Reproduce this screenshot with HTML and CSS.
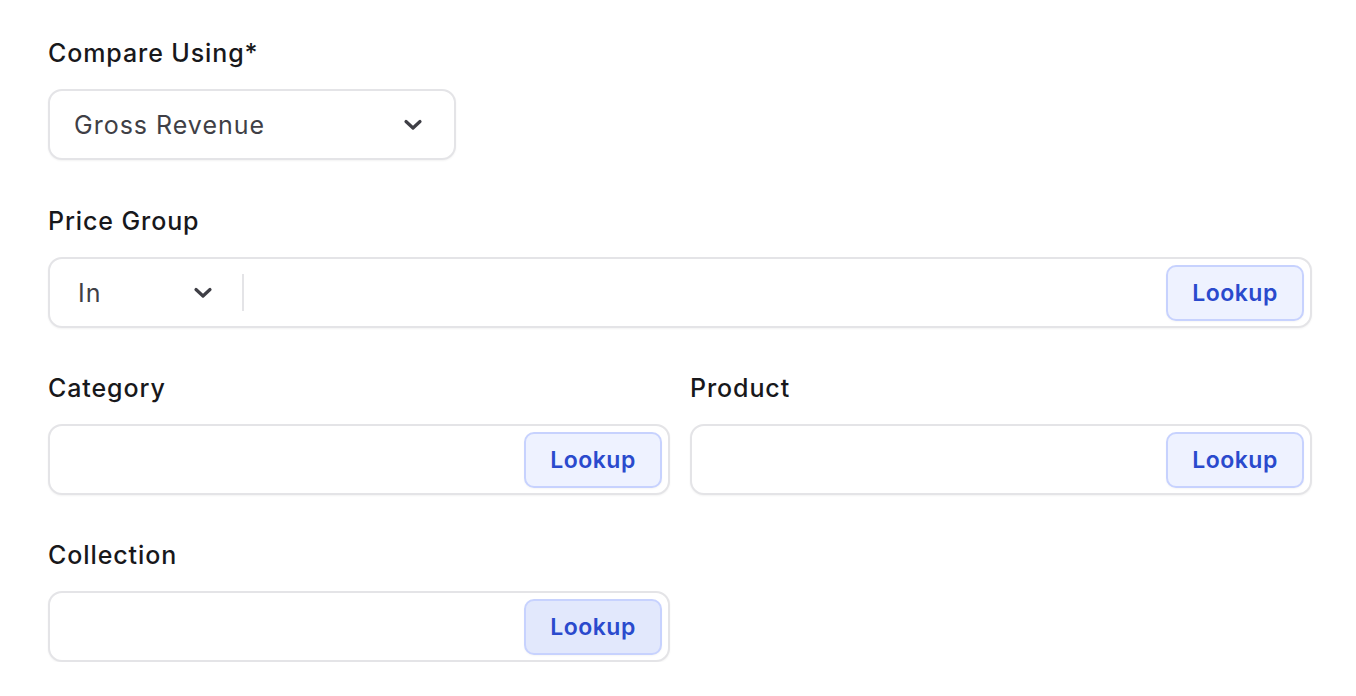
FILE: index.html
```html
<!DOCTYPE html>
<html lang="en">
<head>
<meta charset="utf-8">
<title>Filters</title>
<link rel="stylesheet" href="styles.css">
</head>
<body>
<form class="filters">
  <div class="field field--narrow">
    <label class="field__label">Compare Using*</label>
    <div class="select">
      <span class="select__value">Gross Revenue</span>
      <svg class="chevron" viewBox="0 0 20 12" width="20" height="12"><path d="M3 2.5 L10 9 L17 2.5" fill="none" stroke="currentColor" stroke-width="3.2" stroke-linecap="round" stroke-linejoin="round"/></svg>
    </div>
  </div>

  <div class="field">
    <label class="field__label">Price Group</label>
    <div class="lookup">
      <div class="lookup__op">
        <span class="lookup__op-value">In</span>
        <svg class="chevron" viewBox="0 0 20 12" width="20" height="12"><path d="M3 2.5 L10 9 L17 2.5" fill="none" stroke="currentColor" stroke-width="3.2" stroke-linecap="round" stroke-linejoin="round"/></svg>
      </div>
      <span class="lookup__divider"></span>
      <span class="lookup__input"></span>
      <button type="button" class="lookup__btn">Lookup</button>
    </div>
  </div>

  <div class="field-row">
    <div class="field">
      <label class="field__label">Category</label>
      <div class="lookup">
        <span class="lookup__input"></span>
        <button type="button" class="lookup__btn">Lookup</button>
      </div>
    </div>
    <div class="field">
      <label class="field__label">Product</label>
      <div class="lookup">
        <span class="lookup__input"></span>
        <button type="button" class="lookup__btn">Lookup</button>
      </div>
    </div>
  </div>

  <div class="field-row">
    <div class="field">
      <label class="field__label">Collection</label>
      <div class="lookup">
        <span class="lookup__input"></span>
        <button type="button" class="lookup__btn lookup__btn--hover">Lookup</button>
      </div>
    </div>
  </div>
</form>
</body>
</html>
```

FILE: styles.css
```css
* { box-sizing: border-box; }

body {
  margin: 0;
  background: #ffffff;
  font-family: Inter, "Noto Sans", sans-serif;
  color: #18181b;
}

.filters {
  width: 1264px;
  margin: 0 0 0 48px;
  padding-top: 37px;
  display: flex;
  flex-direction: column;
  gap: 44px;
}

.field {
  display: flex;
  flex-direction: column;
  gap: 20px;
}

.field--narrow {
  width: 408px;
  margin-bottom: 1px;
}

.field__label {
  font-size: 25px;
  line-height: 32px;
  font-weight: 500;
  letter-spacing: 0.9px;
  color: #18181b;
}

.field-row {
  display: grid;
  grid-template-columns: 1fr 1fr;
  gap: 20px;
}

.select,
.lookup {
  height: 71px;
  border: 2px solid #e4e4e7;
  border-radius: 14px;
  background: #fff;
  box-shadow: 0 1px 2px rgba(0, 0, 0, 0.05);
  display: flex;
  align-items: center;
}

.select {
  padding: 0 31px 0 24px;
  justify-content: space-between;
}

.select__value {
  font-size: 25px;
  letter-spacing: 1px;
  color: #3f3f46;
}

.chevron {
  color: #3f3f46;
  flex: none;
}

.lookup {
  padding: 0 6px 0 0;
}

.lookup__op {
  width: 192px;
  padding: 0 29px 0 28px;
  display: flex;
  align-items: center;
  justify-content: space-between;
  align-self: stretch;
}

.lookup__op-value {
  font-size: 25px;
  letter-spacing: 1px;
  color: #3f3f46;
}

.lookup__divider {
  width: 2px;
  height: 37px;
  background: #e4e4e7;
  flex: none;
}

.lookup__input { flex: 1; }

.lookup__btn {
  height: 56px;
  width: 138px;
  border: 2px solid #c7d2fe;
  border-radius: 10px;
  background: #eef2ff;
  color: #2a4acd;
  font-family: Inter, "Noto Sans", sans-serif;
  font-size: 23px;
  font-weight: 600;
  letter-spacing: 0.5px;
  cursor: pointer;
  box-shadow: 0 1px 2px rgba(0, 0, 0, 0.04);
}

.lookup__btn--hover { background: #e2e8fc; }
```
